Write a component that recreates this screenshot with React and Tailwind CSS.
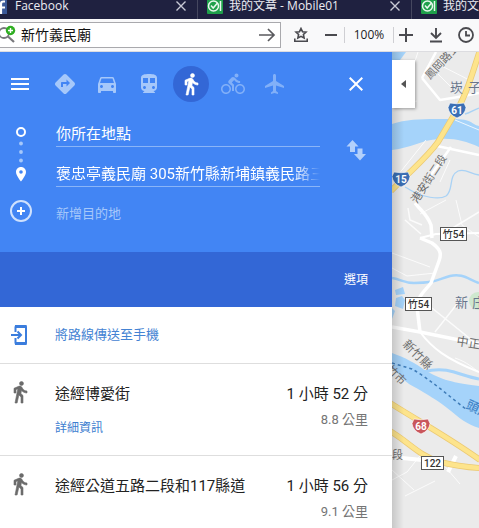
import React from "react";
import {
  MdMenu,
  MdDirections,
  MdDirectionsCar,
  MdDirectionsSubway,
  MdDirectionsBike,
  MdFlight,
  MdClose,
} from "react-icons/md";

function WalkIcon({ className }) {
  return (
    <svg className={className} viewBox="0 0 24 24" fill="currentColor" stroke="currentColor" strokeWidth="0.6">
      <path d="M13.500 5.500c1.100 0 2-.9 2-2s-.9-2-2-2-2 .9-2 2 .9 2 2 2zM9.800 8.900L7 23h2.100l1.800-8 2.100 2v6h2v-7.500l-2.100-2 .6-3C14.800 12 16.800 13 19 13v-2c-1.900 0-3.500-1-4.300-2.400l-1-1.600c-.4-.6-1-1-1.700-1-.3 0-.5.1-.8.1L6 8.300V13h2V9.600l1.800-.7" />
    </svg>
  );
}

const modes = [
  { label: "最佳", Icon: MdDirections, tone: "text-[#a6c8fa]" },
  { label: "開車", Icon: MdDirectionsCar, tone: "text-[#a6c8fa]" },
  { label: "大眾運輸", Icon: MdDirectionsSubway, tone: "text-[#a6c8fa]" },
  { label: "步行", Icon: WalkIcon, tone: "bg-[#3367d6] text-white" },
  { label: "單車", Icon: MdDirectionsBike, tone: "text-[#82b0f8]" },
  { label: "飛機", Icon: MdFlight, tone: "text-[#82b0f8]" },
];

const routes = [
  { name: "途經博愛街", time: "1 小時 52 分", distance: "8.8 公里", details: true },
  { name: "途經公道五路二段和117縣道", time: "1 小時 56 分", distance: "9.1 公里", details: false },
];

function TabClose() {
  return (
    <button type="button" aria-label="關閉分頁" className="ml-auto shrink-0 text-[#c9cad6]">
      <svg className="size-3" viewBox="0 0 12 12" stroke="currentColor" strokeWidth="1.4" fill="none">
        <path d="M1.5 1.5l9 9M10.5 1.5l-9 9" />
      </svg>
    </button>
  );
}

function MobileLogo() {
  return (
    <svg className="size-4 shrink-0" viewBox="0 0 16 16">
      <rect width="16" height="16" rx="1" fill="#1fa04b" />
      <circle cx="6.5" cy="8" r="5" fill="none" stroke="#e9f8ee" strokeWidth="1.5" />
      <path d="M4 7.5l2.200 2.500L10.500 5" fill="none" stroke="#e9f8ee" strokeWidth="1.5" />
      <path d="M13.500 3v10" stroke="#e9f8ee" strokeWidth="1.500" />
    </svg>
  );
}

function TabBar() {
  return (
    <div className="flex h-[19px] shrink-0 items-end overflow-hidden bg-[#1f2140] text-xs text-[#ececf2]">
      <div className="flex h-[27px] w-[197px] shrink-0 items-center gap-2 pr-[10px]">
        <svg className="h-4 w-[7px] shrink-0" viewBox="9 0 7 16">
          <rect width="16" height="16" fill="#3b5998" />
          <path d="M10 16V9.500H8M10 9.500h4M10 9.500V6q0-2.500 2.500-2.500H14" fill="none" stroke="#fff" strokeWidth="2.200" />
        </svg>
        <span>Facebook</span>
        <TabClose />
      </div>
      <div className="flex h-[27px] w-[214px] shrink-0 items-center gap-[6px] border-l border-[#45475f] pr-[10px] pl-[9px]">
        <MobileLogo />
        <span className="whitespace-nowrap">我的文章 - Mobile01</span>
        <TabClose />
      </div>
      <div className="flex h-[27px] min-w-0 flex-1 items-center gap-[6px] overflow-hidden border-l border-[#45475f] pl-[9px]">
        <MobileLogo />
        <span className="whitespace-nowrap">我的文章 - Mobile01</span>
      </div>
    </div>
  );
}

function Toolbar() {
  return (
    <div className="flex h-[33px] shrink-0 items-center border-b border-[#dcdce0] bg-[#f9f9fa] text-[#4a4a4f]">
      <form className="flex h-[26px] w-[281px] shrink-0 items-center border border-l-0 border-[#a9a9ad] bg-white pr-1">
        <svg className="h-5 w-4 shrink-0" viewBox="0 0 16 20" fill="none">
          <circle cx="4" cy="8" r="5" stroke="#77777b" strokeWidth="1.800" />
          <path d="M8 11.500l6 5.500" stroke="#77777b" strokeWidth="2.200" />
          <circle cx="10.500" cy="5.500" r="4.700" fill="#2fae22" />
          <path d="M10.500 3v5M8 5.500h5" stroke="#fff" strokeWidth="1.400" />
        </svg>
        <input
          aria-label="搜尋"
          defaultValue="新竹義民廟"
          className="ml-[5px] min-w-0 flex-1 bg-transparent text-sm text-[#111] outline-none"
        />
        <button type="submit" aria-label="前往">
          <svg className="h-4 w-[18px]" viewBox="0 0 18 16" fill="none" stroke="#5a5a5e" strokeWidth="1.700">
            <path d="M1 8h15M10 2l6 6-6 6" />
          </svg>
        </button>
      </form>
      <button type="button" aria-label="書籤" className="ml-3">
        <svg className="size-4" viewBox="0 0 16 16" fill="none" stroke="currentColor" strokeWidth="1.600">
          <path d="M8 1.500l1.500 3.200 3.500.4-2.600 2.400.7 3.500L8 9.300 4.900 11l.7-3.500L3 5.100l3.500-.4z" />
          <path d="M1.800 11.500v2.700h12.400v-2.700" />
        </svg>
      </button>
      <button type="button" aria-label="縮小" className="ml-[14px]">
        <svg className="size-4" viewBox="0 0 16 16" stroke="currentColor" strokeWidth="2">
          <path d="M2 8h12" />
        </svg>
      </button>
      <span className="ml-[5px] h-4 border-l border-[#cfcfd3]" />
      <span className="w-[48px] text-center text-xs text-[#1c1c1e]">100%</span>
      <span className="h-4 border-l border-[#cfcfd3]" />
      <button type="button" aria-label="放大" className="ml-1">
        <svg className="size-4" viewBox="0 0 16 16" stroke="currentColor" strokeWidth="2">
          <path d="M1 8h14M8 1v14" />
        </svg>
      </button>
      <button type="button" aria-label="下載" className="ml-[14px]">
        <svg className="size-4" viewBox="0 0 16 16" fill="none" stroke="currentColor" strokeWidth="1.900">
          <path d="M8 1v10M3 6l5 5 5-5M2 14.500h12" />
        </svg>
      </button>
      <button type="button" aria-label="歷史" className="ml-[14px]">
        <svg className="size-4" viewBox="0 0 16 16" fill="none" stroke="currentColor" strokeWidth="1.800">
          <circle cx="8" cy="8" r="7" />
          <path d="M8 4v4.500h4" />
        </svg>
      </button>
    </div>
  );
}

function DirectionsForm() {
  return (
    <div className="bg-[#4285f4] text-white">
      <div className="flex h-16 items-center pr-6 pl-2">
        <button type="button" aria-label="選單">
          <MdMenu className="size-6" />
        </button>
        <div className="ml-[15px] flex gap-[6px]">
          {modes.map(({ label, Icon, tone }) => (
            <button
              key={label}
              type="button"
              aria-label={label}
              className={`flex size-9 items-center justify-center rounded-full ${tone}`}
            >
              <Icon className="size-6" />
            </button>
          ))}
        </div>
        <button type="button" aria-label="關閉路線" className="ml-auto">
          <MdClose className="size-6" />
        </button>
      </div>
      <div className="flex h-[72px] pr-6 pl-2">
        <svg className="h-[72px] w-6 shrink-0" viewBox="0 0 24 72">
          <circle cx="13" cy="16" r="4" fill="none" stroke="#fff" strokeWidth="2" />
          <circle cx="13" cy="27.500" r="1.900" fill="#a6c8fa" />
          <circle cx="13" cy="36" r="1.900" fill="#a6c8fa" />
          <circle cx="13" cy="44.500" r="1.900" fill="#a6c8fa" />
          <path
            d="M13 51c-2.900 0-5 2.200-5 5 0 3.500 5 9.500 5 9.500s5-6 5-9.500c0-2.800-2.100-5-5-5zm0 6.800a1.800 1.800 0 110-3.600 1.800 1.800 0 010 3.600z"
            fill="#fff"
          />
        </svg>
        <div className="ml-6 flex min-w-0 flex-1 flex-col gap-3 pt-[3px]">
          <input
            aria-label="起點"
            defaultValue="你所在地點"
            className="h-7 w-full border-b border-[#8ab5f8] bg-transparent text-[15px] outline-none"
          />
          <div className="h-7 border-b border-[#8ab5f8]">
            <input
              aria-label="目的地"
              defaultValue="褒忠亭義民廟 305新竹縣新埔鎮義民路三段360號"
              className="h-full w-full bg-transparent mask-r-from-90% mask-r-to-100% text-[15px] outline-none"
            />
          </div>
        </div>
        <button type="button" aria-label="對調起點與目的地" className="ml-6 flex w-6 items-center justify-center">
          <svg className="size-6" viewBox="0 0 24 24" fill="#b3d0fb">
            <path d="M8.500 0l6 6.500H11V12H6V6.500H2.500z" />
            <path d="M13.500 8.500h5V14H22l-6 6.500-6-6.500h3.500z" />
          </svg>
        </button>
      </div>
      <button type="button" className="flex h-16 w-full items-start pt-3 pl-[9px] text-[13px] text-[#a6c8fa]">
        <svg className="size-6" viewBox="0 0 24 24" fill="none">
          <circle cx="12" cy="11" r="10" stroke="#cfe1fd" strokeWidth="2" />
          <path d="M12 7v8M8 11h8" stroke="#fff" strokeWidth="2" />
        </svg>
        <span className="ml-[23px] leading-7">新增目的地</span>
      </button>
    </div>
  );
}

function Route({ name, time, distance, details }) {
  return (
    <li className="flex h-[92px] border-b border-[#dedede] pt-4 pr-6 pl-2">
      <WalkIcon className="size-6 shrink-0 text-[#6b6b6b]" />
      <div className="ml-[23px] min-w-0 flex-1">
        <h2 className="text-[15px] leading-7 text-[#222]">{name}</h2>
        {details && (
          <a href="#details" className="block pt-2 text-xs leading-6 text-[#3d7dcf]">
            詳細資訊
          </a>
        )}
      </div>
      <div className="text-right whitespace-nowrap">
        <p className="text-[15px] leading-7 text-[#222]">{time}</p>
        <p className="text-[13px] leading-6 text-[#757575]">{distance}</p>
      </div>
    </li>
  );
}

function PlateLabel({ x, y, w, children }) {
  return (
    <g>
      <rect x={x} y={y} width={w} height="13" fill="#fff" stroke="#555" />
      <text x={x + w / 2} y={y + 10} textAnchor="middle" fontSize="10" fontWeight="500" fill="#333">
        {children}
      </text>
    </g>
  );
}

function Shield({ x, y, fill, children }) {
  return (
    <g transform={`translate(${x} ${y})`}>
      <path d="M-7-7Q0-5.500 7-7L9-2.500Q8 5 0 8-8 5-9-2.500z" fill={fill} stroke="#fff" strokeWidth="0.600" />
      <text y="4" textAnchor="middle" fontSize="10" fontWeight="700" fill="#fff">
        {children}
      </text>
    </g>
  );
}

function MapView() {
  return (
    <main className="relative min-w-0 flex-1 overflow-hidden bg-[#ebebeb]">
      <svg className="block h-full w-full" viewBox="392 52 87 476" preserveAspectRatio="xMinYMin slice" fill="none">
        <rect x="392" y="52" width="87" height="476" fill="#ebebeb" />
        <path d="M392 52h14l-6 8h-8z" fill="#a5d3fa" />
        <path d="M392 124C410 118 430 119 452 119S470 124 479 126v21c-14-6-24-9-40-8-18 1-28 9-47 11z" fill="#a5d3fa" />
        <path d="M405 187c6 3 8 6 16 8 10 3 20 4 25 1 8-6 2-20 12-25 8-3 12 3 21 4M465 114c5-1 8-4 14-6" stroke="#a9d2f5" strokeWidth="1.300" />
        <path d="M392 278c8 1 12 5 22 5 20 0 22-3 36-7 12-3 18 3 29 7" stroke="#a5d3fa" strokeWidth="2.500" />
        <path d="M395 290l8-3 2 7-9 1zM396 298l6-2 3 4-2 9-8-3zM392 308l3 3-3 8z" fill="#a5d3fa" />
        <circle cx="478" cy="301" r="9" fill="#cfe8cf" />
        <path d="M392 353c12 4 25 11 34 18 14 7 20 11 53 15v42c-12-4-20-10-28-17-10-8-20-15-42-27-8-6-10-10-17-16z" fill="#a5d3fa" />
        <path d="M424 372c10-3 20-3 30 0s15 5 25 7" stroke="#a5d3fa" strokeWidth="3" />
        <g stroke="#fff" strokeWidth="1" opacity="0.8">
          <path d="M418 52l-6 18-20 10M430 60l49 25M446 52l-10 20 20 20M392 106l25-5M455 120l24 10" />
          <path d="M398 175l28-35M450 160l-10 22M456 200l6 25 17 12M420 214l26-14M392 253l38 14M392 268l15 8 28-3" />
          <path d="M408 208l2 12 12 5M405 220l16 14M446 232l33-20M432 308l47 38M435 332l22-28" strokeWidth="1.500" />
          <path d="M392 480l15-8 16-20M436 456l24 28M392 470l22 20M405 496l30-15" />
          <path d="M455 358c12 4 18 10 24 14" />
        </g>
        <g stroke="#fff" strokeWidth="3.500" strokeLinejoin="round">
          <path d="M422 78l18 22c14-2 24-4 39-7M422 78l14-26M437 146l42 9M451 147l-25 35" strokeWidth="2.500" />
          <path d="M415 203c6 8 12 11 16 22l1 13M420 238l12 5c8 6 10 10 7 18l-8 22c-6 8-13 12-14 24l3 25" strokeWidth="3.500" />
          <path d="M420 238l16-4 43-1M420 332c12 16 26 27 59 40" strokeWidth="2" />
          <path d="M392 327l28 5 59 12" />
          <path d="M402 458l20 2M456 456l-8 16" strokeWidth="4" />
        </g>
        <g stroke="#ecca74" strokeWidth="6">
          <path d="M480 50c-8 25-14 45-23 60l-19 32c-10 14-22 24-38 40l-9 9" />
          <path d="M390 403c30 19 58 34 90 57M390 431c20 12 28 24 50 31 12 3 24 5 40 6" />
        </g>
        <g stroke="#fde48c" strokeWidth="4.500">
          <path d="M480 50c-8 25-14 45-23 60l-19 32c-10 14-22 24-38 40l-9 9" />
          <path d="M390 403c30 19 58 34 90 57M390 431c20 12 28 24 50 31 12 3 24 5 40 6" />
        </g>
        <path d="M392 363l20 6c18 10 38 28 55 41" stroke="#3f7cb8" strokeWidth="1.500" strokeDasharray="3 3" />
        <g fill="#6e6e6e" fontSize="11">
          <text transform="translate(430 80) rotate(-47)">鳳岡路五段</text>
          <text transform="translate(417 204) rotate(-57)">港安街二段</text>
          <text transform="translate(402 345) rotate(45)" fontSize="12">新竹縣</text>
          <text transform="translate(386 370) rotate(45)">竹市</text>
          <text transform="translate(456 345) rotate(9)" fontSize="12">中正西路</text>
          <text x="392" y="459">段</text>
        </g>
        <g fill="#68758b" fontSize="13">
          <text x="450" y="92">崁</text>
          <text x="468" y="92">子</text>
          <text x="455" y="307">新</text>
          <text x="472" y="307">庄</text>
        </g>
        <text transform="translate(465 408) rotate(25)" fontSize="13" fontWeight="500" fill="#4285c8">頭前溪</text>
        <Shield x={457} y={110} fill="#3b6fb5">61</Shield>
        <Shield x={401} y={179} fill="#3b6fb5">15</Shield>
        <Shield x={421} y={426} fill="#c9565c">68</Shield>
        <PlateLabel x={440.5} y={227.5} w={26}>竹54</PlateLabel>
        <PlateLabel x={405.5} y={297.5} w={26}>竹54</PlateLabel>
        <PlateLabel x={421.5} y={456.5} w={22}>122</PlateLabel>
      </svg>
      <div className="absolute inset-y-0 left-0 w-3 bg-linear-to-r from-black/15 to-transparent" />
      <button
        type="button"
        aria-label="收合側邊面板"
        className="absolute top-2 left-0 flex h-12 w-[23px] items-center justify-center bg-white text-[#555] shadow-[1px_1px_3px_rgba(0,0,0,0.35)]"
      >
        <svg className="h-2 w-[5px]" viewBox="0 0 5 8" fill="currentColor">
          <path d="M5 0v8L0 4z" />
        </svg>
      </button>
    </main>
  );
}

export default function App() {
  return (
    <div className="flex h-screen flex-col overflow-hidden bg-white font-['Roboto','Noto_Sans_CJK_TC',sans-serif]">
      <div className="shrink-0 font-['Open_Sans','Noto_Sans_CJK_TC',sans-serif]">
        <TabBar />
        <Toolbar />
      </div>
      <div className="flex min-h-0 flex-1">
        <aside className="w-[392px] shrink-0 overflow-hidden bg-white">
          <DirectionsForm />
          <div className="flex h-[55px] items-center justify-end bg-[#3367d6] pr-6">
            <button type="button" className="text-xs text-white">
              選項
            </button>
          </div>
          <button
            type="button"
            className="flex h-[57px] w-full items-center border-b border-[#dedede] pl-2 text-[13px] text-[#4483d3]"
          >
            <svg className="size-6" viewBox="0 0 24 24" fill="none" stroke="#3b7ddd">
              <path d="M7.500 9V4q0-1 1-1H17q1 0 1 1v16q0 1-1 1H8.500q-1 0-1-1v-5" strokeWidth="2" />
              <path d="M7 3.500h11.500M7 20.500h11.500" strokeWidth="3" />
              <path d="M3 12h9M9.500 8.500L13 12l-3.500 3.500" strokeWidth="2" />
            </svg>
            <span className="ml-[23px]">將路線傳送至手機</span>
          </button>
          <ul>
            {routes.map((route) => (
              <Route key={route.name} {...route} />
            ))}
          </ul>
        </aside>
        <MapView />
      </div>
    </div>
  );
}
